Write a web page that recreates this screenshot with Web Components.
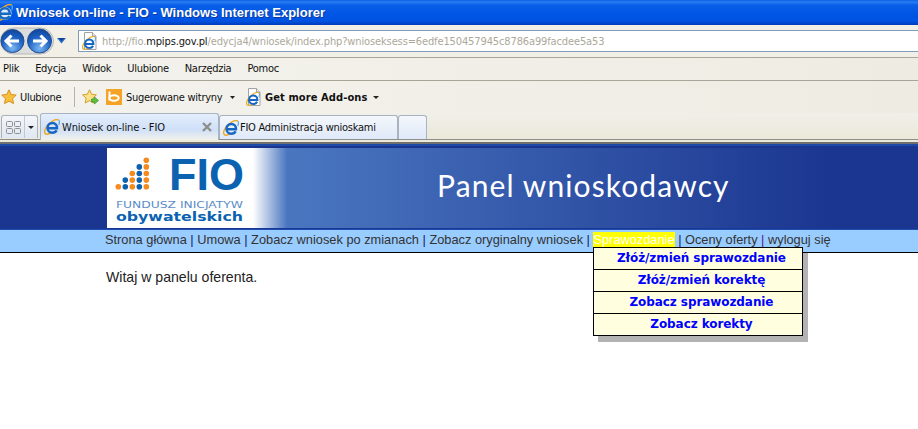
<!DOCTYPE html>
<html lang="pl">
<head>
<meta charset="utf-8">
<title>Wniosek on-line - FIO</title>
<style>
    html, body { margin: 0; padding: 0; background: #fff; }
    body { width: 918px; height: 429px; overflow: hidden; font-family: "Liberation Sans", Arial, sans-serif; }
    ie-titlebar, ie-navbar, ie-menubar, ie-favbar, ie-tabstrip, fio-banner, fio-nav, fio-content { flex: none; }
    #page { display: flex; flex-direction: column; }
</style>
</head>
<body>
<div id="page">
    <ie-titlebar>Wniosek on-line - FIO - Windows Internet Explorer</ie-titlebar>
    <ie-navbar></ie-navbar>
    <ie-menubar></ie-menubar>
    <ie-favbar></ie-favbar>
    <ie-tabstrip></ie-tabstrip>
    <fio-banner></fio-banner>
    <fio-nav></fio-nav>
    <fio-content>Witaj w panelu oferenta.</fio-content>
</div>
<script>
const CHROME_FONT = `"DejaVu Sans Condensed", "Noto Sans", Tahoma, sans-serif`

class IeIcon extends HTMLElement {
    constructor() {
        super()
        this.attachShadow({ mode: 'open' })
    }
    connectedCallback() {
        const size = this.getAttribute('size') || 16
        const light = this.hasAttribute('light')
        this.shadowRoot.innerHTML = `
            <style>
                :host { display: block; width: ${size}px; height: ${size}px; }
                svg { display: block; }
            </style>
            <svg width="${size}" height="${size}" viewBox="0 0 16 16">
                ${light ? '<circle cx="8.300" cy="8.800" r="6.300" fill="#d8ecfb"/>' : ''}
                <path d="M14.800 1C13 .1 10 1 7.500 2.800C4.500 4.800 1.800 8 .9 11C.2 13.600 1 15.400 3 15.300C4.300 15.200 5.700 14.600 7 13.600" fill="none" stroke="#eeaa22" stroke-width="1.400"/>
                <path d="M4.300 9.200H13C13 6 11 4 8.500 4C5.600 4 3.500 6.200 3.500 9C3.500 11.800 5.600 13.700 8.300 13.700C10.300 13.700 11.800 12.900 12.700 11.300" fill="none" stroke="#1668c4" stroke-width="2.400"/>
                <path d="M14.800 1C15.600 2 15.500 4 14.700 6" fill="none" stroke="#5aa7e6" stroke-width="1.200"/>
            </svg>
        `
    }
}

class IeTitlebar extends HTMLElement {
    constructor() {
        super()
        this.attachShadow({ mode: 'open' })
        this.shadowRoot.innerHTML = `
            <style>
                :host {
                    display: flex;
                    align-items: center;
                    height: 25px;
                    overflow: hidden;
                    background: linear-gradient(#0a62e4 0, #2a7cf2 2px, #0a5fe8 5px, #0055e5 14px, #0053e2 21px, #0041c4 24px, #003cb8 25px);
                }
                ie-icon { margin: 0 3px 0 -4px; flex: none; }
                .text {
                    font: bold 13px "Liberation Sans", "DejaVu Sans", sans-serif;
                    color: #fff;
                    text-shadow: 1px 1px 0 #0b3aa0;
                    white-space: nowrap;
                }
            </style>
            <ie-icon size="17" light></ie-icon>
            <span class="text"><slot></slot></span>
        `
    }
}

class IeNavbar extends HTMLElement {
    constructor() {
        super()
        this.attachShadow({ mode: 'open' })
        this.shadowRoot.innerHTML = `
            <style>
                :host {
                    display: flex;
                    align-items: center;
                    height: 33px;
                    box-sizing: border-box;
                    border-bottom: 1px solid #a7a597;
                    background: #f1efe6;
                }
                .pod { display: block; height: 28px; width: 54px; flex: none; }
                .chevron { flex: none; margin: 0 12px 0 3px; }
                .address {
                    flex: 1;
                    display: flex;
                    align-items: center;
                    height: 22px;
                    box-sizing: border-box;
                    border: 1px solid #7f9db9;
                    border-right: none;
                    background: #fff;
                    padding-left: 3px;
                    gap: 5px;
                }
                .url {
                    font: 11px ${CHROME_FONT};
                    letter-spacing: -.125px;
                    color: #aca899;
                    white-space: nowrap;
                }
                .url b { font-weight: 400; color: #111; }
                ie-page { flex: none; }
            </style>
            <svg class="pod" viewBox="0 0 54 28">
                <defs>
                    <radialGradient id="orb" cx=".5" cy=".8" r=".85">
                        <stop offset="0" stop-color="#7ab8f2"/><stop offset=".55" stop-color="#1f62c4"/><stop offset="1" stop-color="#0d3f94"/>
                    </radialGradient>
                </defs>
                <rect x=".5" y="1" width="53" height="26" rx="13" fill="#dcdcdc" stroke="#b9b9b9"/>
                <circle cx="12.500" cy="14" r="11.500" fill="url(#orb)" stroke="#24508f"/>
                <circle cx="39.500" cy="14" r="12" fill="url(#orb)" stroke="#24508f"/>
                <path d="M6 14h13M11.500 8.500 6 14l5.500 5.500" fill="none" stroke="#fff" stroke-width="3"/>
                <path d="M33 14h13M40.500 8.500 46 14l-5.500 5.500" fill="none" stroke="#fff" stroke-width="3"/>
            </svg>
            <svg class="chevron" width="9" height="6" viewBox="0 0 9 6"><path d="M0 0h9L4.500 5.500z" fill="#2a6fc2"/><path d="M1.500 0h6L4.500 3z" fill="#0d3f94"/></svg>
            <div class="address">
                <ie-page></ie-page>
                <span class="url">http://fio.<b>mpips.gov.pl</b>/edycja4/wniosek/index.php?wnioseksess=6edfe150457945c8786a99facdee5a53</span>
            </div>
        `
    }
}

class IePage extends HTMLElement {
    constructor() {
        super()
        this.attachShadow({ mode: 'open' })
        this.shadowRoot.innerHTML = `
            <style>
                :host { display: block; position: relative; width: 15px; height: 18px; }
                svg { display: block; }
                ie-icon { position: absolute; left: 0; top: 4px; }
            </style>
            <svg width="15" height="18" viewBox="0 0 15 18">
                <path d="M2.500 .5h8l3.500 3.500v13.500h-11.500z" fill="#fff" stroke="#a3a3a3"/>
                <path d="M10.500 .5v3.500h3.500" fill="#eee" stroke="#a3a3a3"/>
            </svg>
            <ie-icon size="14"></ie-icon>
        `
    }
}

class IeMenubar extends HTMLElement {
    constructor() {
        super()
        this.attachShadow({ mode: 'open' })
        const items = ['Plik', 'Edycja', 'Widok', 'Ulubione', 'Narzędzia', 'Pomoc']
        this.shadowRoot.innerHTML = `
            <style>
                :host {
                    display: flex;
                    align-items: center;
                    gap: 16px;
                    height: 23px;
                    box-sizing: border-box;
                    padding: 0 0 1px 3px;
                    border-bottom: 1px solid #a7a597;
                    background: linear-gradient(90deg, #f3f2ed, #eeece2);
                    font: 11px ${CHROME_FONT};
                    letter-spacing: -.27px;
                    color: #111;
                }
            </style>
            ${items.map(i => `<span>${i}</span>`).join('')}
        `
    }
}

class IeFavbar extends HTMLElement {
    constructor() {
        super()
        this.attachShadow({ mode: 'open' })
        this.shadowRoot.innerHTML = `
            <style>
                :host {
                    display: flex;
                    align-items: center;
                    height: 32px;
                    box-sizing: border-box;
                    padding: 0 0 0 1px;
                    background: linear-gradient(90deg, #f3f2ed, #eeece2);
                    font: 11px ${CHROME_FONT};
                    color: #111;
                }
                svg { display: block; flex: none; }
                span { white-space: nowrap; flex: none; }
                .sep { width: 1px; height: 20px; background: #b5b3a5; margin: 0 7px 0 13px; flex: none; }
                .caret { margin: 0 11px 0 6px; }
                .bold { font-weight: 700; width: 103px; letter-spacing: .1px; }
                .fav { width: 41px; letter-spacing: -.3px; }
                .sug { width: 98px; letter-spacing: -.27px; }
                ie-page { flex: none; margin-right: 4px; }
            </style>
            <svg width="16" height="16" viewBox="0 0 16 16" style="margin-right:3px"><path d="M8 .8l2.200 4.600 5 .7-3.600 3.500.9 5-4.500-2.400-4.500 2.400.9-5L.8 6.100l5-.7z" fill="#f8bf3a" stroke="#d08a16" stroke-width=".9"/></svg>
            <span class="fav">Ulubione</span>
            <div class="sep"></div>
            <svg width="17" height="16" viewBox="0 0 17 16" style="margin-right:7px"><path d="M7.500 .8l2.100 4.400 4.800.7-3.500 3.300.8 4.800-4.200-2.300-4.200 2.300.8-4.800L.6 5.900l4.800-.7z" fill="#fbe18a" stroke="#c9971e" stroke-width=".9"/><path d="M9.500 10h3V8l4 3.500-4 3.500v-2h-3z" fill="#5cc23f" stroke="#2f8a1f" stroke-width=".6"/></svg>
            <svg width="16" height="16" viewBox="0 0 16 16" style="margin-right:4px"><rect width="16" height="16" fill="#f5a327"/><path d="M3.500 2.500v9" stroke="#fff" stroke-width="2" fill="none"/><ellipse cx="8" cy="9" rx="4.700" ry="2.800" fill="none" stroke="#fff" stroke-width="2"/></svg>
            <span class="sug">Sugerowane witryny</span>
            <svg class="caret" width="5" height="3" viewBox="0 0 5 3"><path d="M0 0h5L2.500 3z" fill="#222"/></svg>
            <ie-page></ie-page>
            <span class="bold">Get more Add-ons</span>
            <svg class="caret" style="margin-left:5px" width="6" height="3" viewBox="0 0 6 3"><path d="M0 0h6L3 3z" fill="#222"/></svg>
        `
    }
}

class IeTab extends HTMLElement {
    constructor() {
        super()
        this.attachShadow({ mode: 'open' })
    }
    connectedCallback() {
        const active = this.hasAttribute('active')
        this.shadowRoot.innerHTML = `
            <style>
                :host {
                    display: flex;
                    align-items: center;
                    gap: ${active ? 2 : 1}px;
                    box-sizing: border-box;
                    width: 179px;
                    height: ${active ? 27 : 24}px;
                    margin-top: ${active ? 0 : 2}px;
                    padding: 0 6px 0 3px;
                    border: 1px solid #a9b2bf;
                    border-bottom: none;
                    border-radius: 3px 3px 0 0;
                    background: ${active ? 'linear-gradient(#e4eefc, #cfe0f8 60%, #f2f1ea)' : 'linear-gradient(#f4f7fc, #dfe9f8)'};
                    font: 11px ${CHROME_FONT};
                    letter-spacing: ${active ? -.1 : -.26}px;
                    color: #111;
                    white-space: nowrap;
                }
                svg { margin-left: auto; }
                ie-icon { flex: none; }
            </style>
            <ie-icon size="16"></ie-icon>
            <span><slot></slot></span>
            ${active ? '<svg width="10" height="10" viewBox="0 0 10 10"><path d="M1 1l8 8M9 1l-8 8" stroke="#8e8e8e" stroke-width="2.400"/></svg>' : ''}
        `
    }
}

class IeTabstrip extends HTMLElement {
    constructor() {
        super()
        this.attachShadow({ mode: 'open' })
        this.shadowRoot.innerHTML = `
            <style>
                :host {
                    display: flex;
                    align-items: flex-start;
                    height: 31px;
                    box-sizing: border-box;
                    padding-left: 1px;
                    background: linear-gradient(#f0efe9, #ebe9da 26px, #8d8d8d 26px, #8d8d8d 27px, #ece9d8 27px, #ece9d8 29px, #6f6f6f 29px);
                }
                .quick {
                    display: flex;
                    margin: 2px 2px 0 0;
                    height: 23px;
                    width: 37px;
                    box-sizing: border-box;
                    border: 1px solid #a9b2bf;
                    border-bottom: none;
                    border-radius: 3px 3px 0 0;
                    background: linear-gradient(#f4f6fa, #dfe7f3);
                    flex: none;
                }
                .grid { width: 23px; display: grid; place-items: center; border-right: 1px solid #c3c9d2; box-sizing: border-box; }
                .drop { flex: 1; display: grid; place-items: center; }
                .new {
                    width: 29px;
                    height: 24px;
                    margin-top: 2px;
                    box-sizing: border-box;
                    border: 1px solid #a9b2bf;
                    border-bottom: none;
                    border-radius: 3px 3px 0 0;
                    background: linear-gradient(#f4f7fc, #dfe9f8);
                    flex: none;
                }
                svg { display: block; }
            </style>
            <div class="quick">
                <div class="grid"><svg width="15" height="13" viewBox="0 0 15 13" fill="none" stroke="#8e8e8e"><rect x=".5" y=".5" width="6" height="5" rx="1"/><rect x="8.500" y=".5" width="6" height="5" rx="1"/><rect x=".5" y="7.500" width="6" height="5" rx="1"/><rect x="8.500" y="7.500" width="6" height="5" rx="1"/></svg></div>
                <div class="drop"><svg width="6" height="3" viewBox="0 0 6 3"><path d="M0 0h6L3 3z" fill="#222"/></svg></div>
            </div>
            <ie-tab active>Wniosek on-line - FIO</ie-tab>
            <ie-tab>FIO Administracja wnioskami</ie-tab>
            <div class="new"></div>
        `
    }
}

class FioBanner extends HTMLElement {
    constructor() {
        super()
        this.attachShadow({ mode: 'open' })
        const dot = (c, r, color) => `<circle cx="${11.3 + c * 7}" cy="${12.3 + r * 6.6}" r="2.800" fill="${color}"/>`
        const rows = [[4], [3, 4], [2, 3, 4], [1, 2, 3, 4], [0, 1, 2, 3, 4]]
        const dots = rows.map((cols, r) => cols.map(c => dot(c, r, c % 2 ? '#0d62b0' : '#f58a1f')).join('')).join('')
        this.shadowRoot.innerHTML = `
            <style>
                :host {
                    display: block;
                    height: 86px;
                    box-sizing: border-box;
                    padding: 2px 0 1px 107px;
                    background: #1b3690;
                    border-top: 2px solid #1c4aa6;
                    border-bottom: 1px solid #1f4fae;
                }
                .image {
                    display: flex;
                    align-items: center;
                    width: 740px;
                    height: 100%;
                    background: linear-gradient(90deg, #fff 0, #fff 146px, #4a76c0 180px, #1b3690 720px);
                }
                svg { display: block; flex: none; }
                .title {
                    margin-left: 151px;
                    font: 400 30px Lato, "Noto Sans", sans-serif;
                    color: #fff;
                    white-space: nowrap;
                    letter-spacing: 1.1px;
                    padding-bottom: 6px;
                }
            </style>
            <div class="image">
                <svg width="179" height="80" viewBox="0 0 179 80">
                    ${dots}
                    <text x="62" y="42" font-family="Liberation Sans, sans-serif" font-weight="700" font-size="44.500" fill="#0b62b0" textLength="75" lengthAdjust="spacingAndGlyphs">FIO</text>
                    <text x="9" y="60" font-family="DejaVu Sans, sans-serif" font-size="9" fill="#5a8cc8" textLength="127" lengthAdjust="spacingAndGlyphs">FUNDUSZ INICJATYW</text>
                    <text x="9" y="72.500" font-family="DejaVu Sans, sans-serif" font-weight="700" font-size="11.500" fill="#0b62b0" textLength="127" lengthAdjust="spacingAndGlyphs">obywatelskich</text>
                </svg>
                <span class="title">Panel wnioskodawcy</span>
            </div>
        `
    }
}

class FioMenu extends HTMLElement {
    constructor() {
        super()
        this.attachShadow({ mode: 'open' })
        const items = ['Złóż/zmień sprawozdanie', 'Złóż/zmień korektę', 'Zobacz sprawozdanie', 'Zobacz korekty']
        this.shadowRoot.innerHTML = `
            <style>
                :host {
                    position: absolute;
                    left: 0;
                    top: 15px;
                    z-index: 2;
                    display: block;
                    width: 210px;
                    box-sizing: border-box;
                    border: 1px solid #000;
                    background: #ffffe0;
                    box-shadow: 5px 6px 0 #b3b3b3;
                    font: bold 12px "DejaVu Sans", Verdana, sans-serif;
                    letter-spacing: -.08px;
                    color: #0000ff;
                    text-align: center;
                    white-space: normal;
                }
                a {
                    display: block;
                    height: 22px;
                    line-height: 21px;
                    box-sizing: border-box;
                    padding-left: 6px;
                    border-bottom: 1px solid #000;
                    color: inherit;
                    text-decoration: none;
                }
                a:last-child { border-bottom: none; height: 21px; }
            </style>${items.map(i => `<a href="#">${i}</a>`).join('')}`
    }
}

class FioNav extends HTMLElement {
    constructor() {
        super()
        this.attachShadow({ mode: 'open' })
        this.shadowRoot.innerHTML = `
            <style>
                :host {
                    display: flex;
                    height: 23px;
                    box-sizing: border-box;
                    padding: 2px 0 0 105px;
                    background: #99ccff;
                    border-bottom: 1px solid #000;
                    font: 12.8px "Liberation Sans", Arial, sans-serif;
                    color: #333;
                    white-space: pre;
                    line-height: 15px;
                }
                .sep { color: #1a1a6e; }
                .purple { color: #551a8b; }
                .wrap { position: relative; }
                .hot { display: block; background: #ffff00; color: #fff; }
            </style>
            <span>Strona główna</span><span class="sep"> | </span><span>Umowa</span><span class="sep"> | </span><span>Zobacz wniosek po zmianach</span><span class="sep"> | </span><span>Zobacz oryginalny wniosek</span><span class="sep"> | </span>
            <span class="wrap"><span class="hot">Sprawozdanie</span><fio-menu></fio-menu></span>
            <span class="sep"> | </span><span>Oceny oferty</span><span class="purple"> | </span><span>wyloguj się</span>
        `
    }
}

class FioContent extends HTMLElement {
    constructor() {
        super()
        this.attachShadow({ mode: 'open' })
        this.shadowRoot.innerHTML = `
            <style>
                :host {
                    display: block;
                    padding: 16px 0 0 106px;
                    font: 14.1px "Liberation Sans", Arial, sans-serif;
                    color: #222;
                }
            </style>
            <slot></slot>
        `
    }
}

customElements.define('ie-icon', IeIcon)
customElements.define('ie-page', IePage)
customElements.define('ie-titlebar', IeTitlebar)
customElements.define('ie-navbar', IeNavbar)
customElements.define('ie-menubar', IeMenubar)
customElements.define('ie-favbar', IeFavbar)
customElements.define('ie-tab', IeTab)
customElements.define('ie-tabstrip', IeTabstrip)
customElements.define('fio-banner', FioBanner)
customElements.define('fio-menu', FioMenu)
customElements.define('fio-nav', FioNav)
customElements.define('fio-content', FioContent)
</script>
</body>
</html>
